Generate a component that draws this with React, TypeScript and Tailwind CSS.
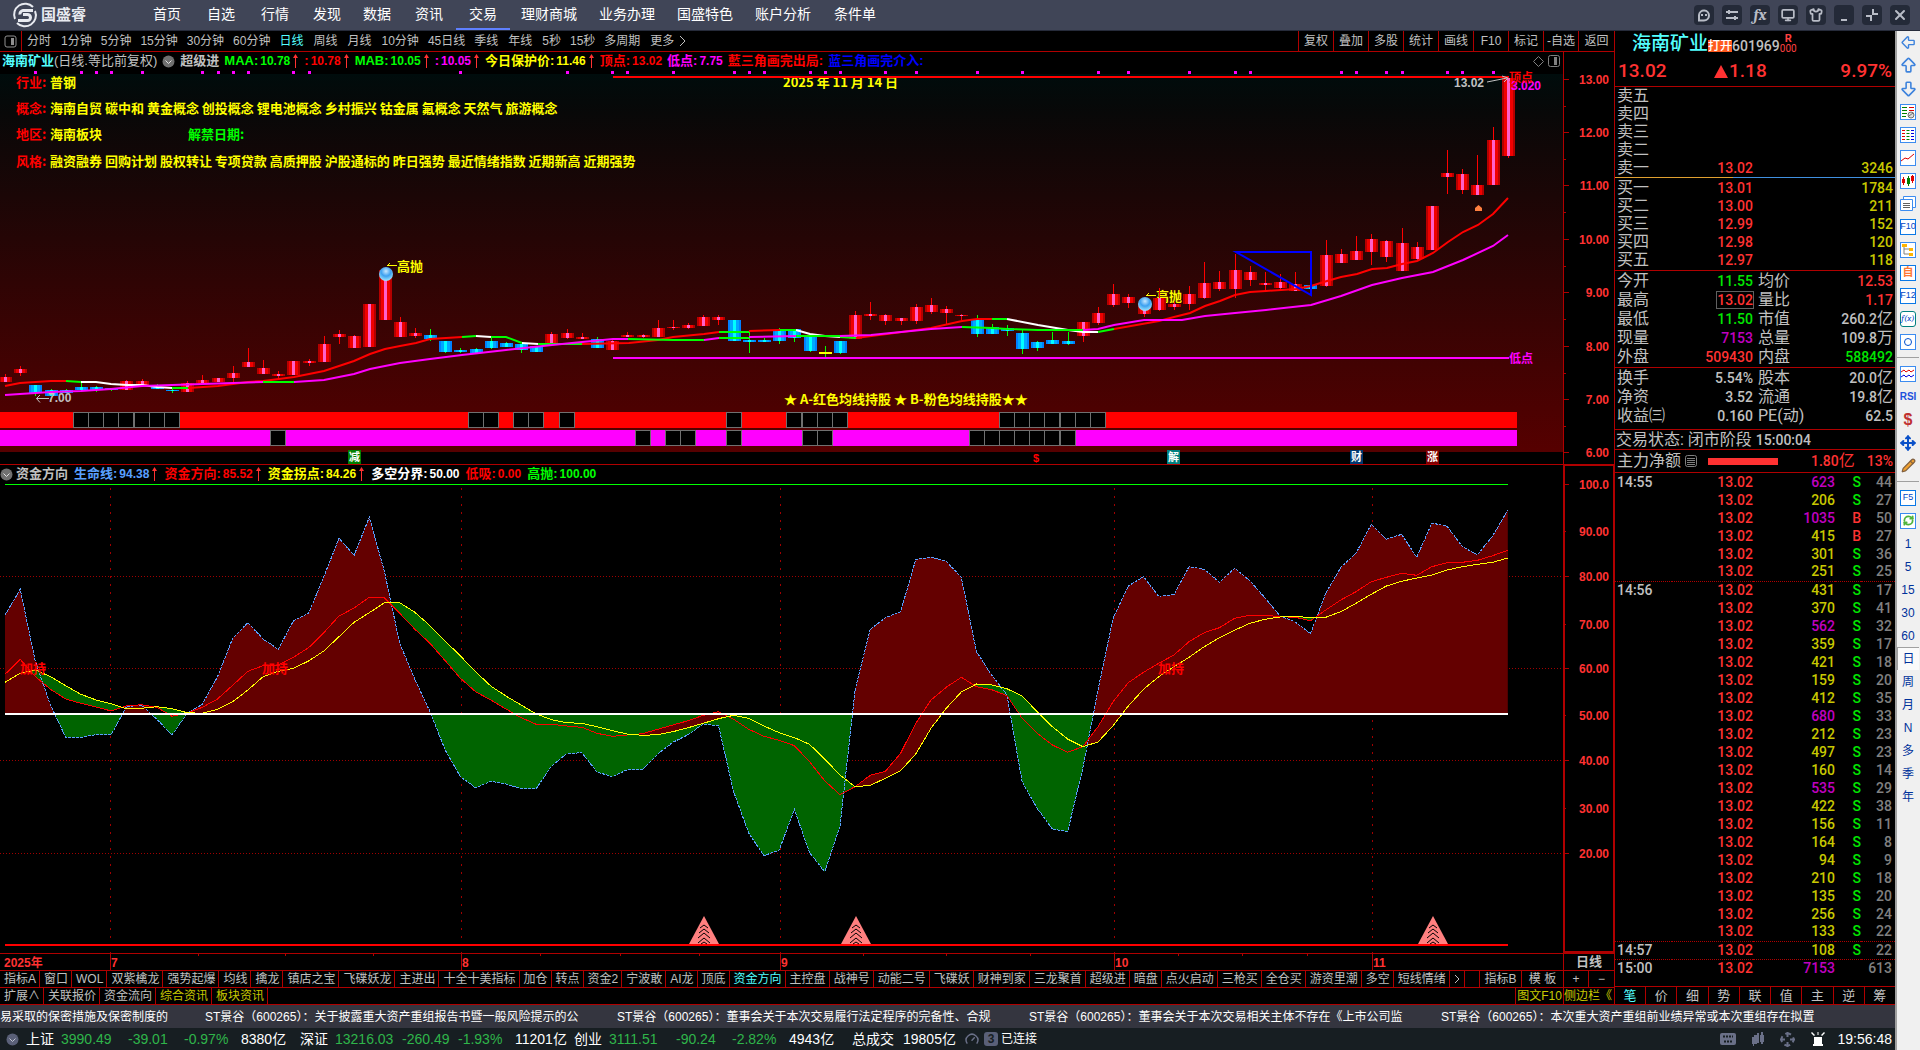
import React from 'react';
import {
  ArrowBigDown,
  ArrowBigLeft,
  ArrowBigUp,
  Gauge,
  Monitor,
  Move,
  Pencil,
  RefreshCw,
  Shirt,
  X,
} from 'lucide-react';

const CJK = 'font-["Liberation_Sans","Noto_Sans_CJK_SC",sans-serif]';
const DIGITS = 'font-["Roboto","Noto_Sans_CJK_SC",sans-serif] font-medium';

const NAV = [
  { label: '首页', w: 'w-[54px]' },
  { label: '自选', w: 'w-[54px]' },
  { label: '行情', w: 'w-[54px]' },
  { label: '发现', w: 'w-[50px]' },
  { label: '数据', w: 'w-[50px]' },
  { label: '资讯', w: 'w-[54px]' },
  { label: '交易', w: 'w-[54px]' },
  { label: '理财商城', w: 'w-[78px]' },
  { label: '业务办理', w: 'w-[78px]' },
  { label: '国盛特色', w: 'w-[78px]' },
  { label: '账户分析', w: 'w-[78px]' },
  { label: '条件单', w: 'w-[66px]' },
];

const PERIODS = ['分时', '1分钟', '5分钟', '15分钟', '30分钟', '60分钟', '日线', '周线', '月线', '10分钟', '45日线', '季线', '年线', '5秒', '15秒', '多周期', '更多'];
const TOOLS = ['复权', '叠加', '多股', '统计', '画线', 'F10', '标记', '-自选', '返回'];

const INDICATORS = [
  '指标A', '窗口', 'WOL', '双紫檎龙', '强势起爆', '均线', '擒龙', '镇店之宝', '飞碟妖龙', '主进出', '十全十美指标',
  '加仓', '转点', '资金2', '宁波敢', 'AI龙', '顶底', '资金方向', '主控盘', '战神号', '动能二号', '飞碟妖', '财神到家',
  '三龙聚首', '超级进', '暗盘', '点火启动', '三枪买', '全仓买', '游资里潮', '多空', '短线情绪',
];

type Candle = [number, number, number, number, string];

// high, body top, body bottom, low, colour
const CANDLES: Candle[] = [
  [374, 377, 382, 382, 'r'], [366, 369, 373, 376, 'r'], [385, 385, 393, 396, 'b'], [389, 390, 396, 396, 'b'],
  [389, 390, 393, 393, 'b'], [382, 387, 390, 390, 'b'], [386, 387, 390, 392, 'b'], [388, 388, 390, 391, 'b'],
  [380, 381, 390, 390, 'r'], [379, 381, 385, 385, 'r'], [384, 387, 389, 389, 'b'], [388, 390, 391, 393, 'b'],
  [381, 383, 392, 392, 'r'], [375, 380, 383, 383, 'r'], [378, 378, 382, 382, 'r'], [366, 373, 378, 382, 'r'],
  [348, 362, 367, 367, 'r'], [360, 368, 374, 374, 'r'], [371, 374, 376, 379, 'r'], [361, 361, 375, 375, 'r'],
  [359, 361, 363, 366, 'r'], [336, 344, 362, 362, 'r'], [330, 334, 337, 344, 'r'], [335, 336, 348, 348, 'r'],
  [304, 304, 347, 347, 'r'], [268, 270, 320, 320, 'r'], [317, 322, 337, 337, 'r'], [328, 333, 336, 338, 'r'],
  [329, 335, 339, 341, 'b'], [341, 341, 352, 353, 'b'], [348, 350, 352, 353, 'b'], [348, 349, 353, 353, 'b'],
  [338, 341, 348, 349, 'b'], [342, 343, 347, 347, 'b'], [344, 344, 350, 353, 'b'], [346, 346, 352, 352, 'b'],
  [332, 334, 345, 345, 'r'], [329, 333, 338, 339, 'r'], [333, 337, 339, 339, 'r'], [337, 339, 348, 348, 'b'],
  [340, 341, 350, 350, 'r'], [332, 335, 337, 337, 'r'], [334, 335, 337, 338, 'r'], [320, 328, 337, 337, 'r'],
  [320, 327, 328, 330, 'r'], [323, 325, 328, 329, 'r'], [315, 317, 326, 326, 'r'], [315, 317, 320, 325, 'r'],
  [320, 320, 341, 341, 'b'], [331, 340, 342, 353, 'b'], [338, 340, 342, 342, 'b'], [328, 331, 341, 344, 'b'],
  [329, 329, 338, 342, 'b'], [337, 337, 351, 352, 'b'], [346, 352, 354, 357, 'y'], [341, 341, 353, 354, 'b'],
  [311, 315, 339, 339, 'r'], [302, 314, 316, 320, 'r'], [314, 315, 321, 325, 'r'], [318, 318, 321, 325, 'r'],
  [304, 307, 321, 324, 'r'], [298, 305, 312, 314, 'r'], [306, 309, 313, 324, 'r'], [314, 315, 316, 320, 'r'],
  [315, 320, 334, 337, 'b'], [324, 327, 334, 334, 'b'], [325, 328, 331, 336, 'b'], [330, 333, 349, 354, 'b'],
  [341, 342, 348, 351, 'b'], [332, 340, 344, 344, 'b'], [332, 341, 344, 345, 'b'], [322, 322, 336, 342, 'r'],
  [307, 313, 323, 325, 'r'], [284, 294, 305, 307, 'r'], [294, 297, 303, 308, 'r'], [300, 303, 314, 317, 'r'],
  [288, 298, 310, 311, 'r'], [302, 304, 307, 310, 'r'], [286, 294, 304, 310, 'r'], [262, 283, 298, 299, 'r'],
  [271, 282, 289, 291, 'r'], [254, 270, 289, 298, 'r'], [266, 272, 280, 286, 'r'], [272, 283, 285, 291, 'r'],
  [274, 282, 288, 290, 'r'], [272, 284, 291, 291, 'r'], [284, 285, 289, 289, 'b'], [240, 255, 286, 287, 'r'],
  [249, 254, 263, 263, 'r'], [236, 251, 260, 260, 'r'], [234, 239, 252, 265, 'r'], [240, 241, 257, 262, 'r'],
  [228, 243, 271, 271, 'r'], [242, 247, 259, 261, 'r'], [206, 206, 250, 250, 'r'], [150, 173, 177, 194, 'r'],
  [169, 174, 190, 194, 'r'], [155, 185, 195, 195, 'r'], [127, 140, 185, 185, 'r'], [76, 78, 156, 158, 'r'],
];

const CANDLE_COLORS: Record<string, string[]> = {
  r: ['#b40000', '#f00000', '#ff60c8', '#ff0000'],
  b: ['#0080ff', '#00a8ff', '#00ffff', '#00ff00'],
  y: ['#ffff00', '#ffff00', '#ffff00', '#00ff00'],
};

const MA_RED = '#ff0000';
const MA_PINK = '#ff00ff';
const UP_GREEN = '#00ff00';

const MAA: [string, string][] = [
  [MA_RED, '5,386 20,383 51,381 66,381'],
  [UP_GREEN, '66,381 81,382'],
  ['#ffffff', '81,382 96,382 111,384 127,385 142,385 157,387 172,388'],
  [UP_GREEN, '172,388 188,388'],
  [MA_RED, '188,388 218,386 233,384 248,382 263,381 279,379 294,377 309,374 324,371 339,366 354,361 370,354 385,349 400,346 416,343 430,339 462,337'],
  [UP_GREEN, '462,337 476,336'],
  ['#ffffff', '476,336 491,337'],
  [UP_GREEN, '491,337 506,337 522,343'],
  ['#ffffff', '522,343 538,344'],
  [UP_GREEN, '538,344 552,344 582,344'],
  [MA_RED, '582,344 629,343 658,340 673,337 704,334 719,332'],
  [UP_GREEN, '719,332 749,332'],
  [MA_RED, '749,331 780,330'],
  [UP_GREEN, '780,330 796,330'],
  ['#ffffff', '796,330 810,334 825,336 840,337'],
  [UP_GREEN, '840,337 856,338'],
  [MA_RED, '856,338 887,334 931,328 962,321 977,319 992,319'],
  [UP_GREEN, '992,319 1007,319'],
  ['#ffffff', '1007,319 1038,325 1068,330 1083,332 1098,332'],
  [UP_GREEN, '1098,332 1114,329'],
  [MA_RED, '1114,329 1159,321 1174,317 1190,313 1205,306 1220,301 1235,295 1250,292 1266,291 1281,290 1296,289 1311,286 1327,281 1341,277 1357,274 1372,269 1387,268 1402,264 1417,261 1433,253 1448,242 1463,232 1478,225 1493,214 1508,198'],
];

const MAB: [string, string][] = [
  [MA_PINK, '5,395 20,394 51,392 81,391 111,389 142,386 172,385 203,384 233,383 263,382'],
  [UP_GREEN, '263,382 294,382'],
  [MA_PINK, '294,382 324,380 339,377 354,374 370,369 400,363 430,359 462,355 506,350 552,345 582,342 613,339 628,339'],
  [UP_GREEN, '628,339 673,340 704,340'],
  [MA_PINK, '704,340 719,338'],
  [UP_GREEN, '719,338 749,338'],
  [MA_PINK, '749,337 796,336'],
  [UP_GREEN, '796,336 840,336'],
  [MA_PINK, '840,336 871,335 901,332 931,329 962,327'],
  [UP_GREEN, '962,327 992,328 1007,329 1038,330 1083,330'],
  [MA_PINK, '1083,330 1098,329 1114,325 1144,320 1182,320 1205,316 1235,313 1266,310 1311,305 1341,296 1372,285 1402,278 1433,272 1463,260 1493,246 1508,235'],
];

const DOTS = [
  2, 5, 6, 7, 9, 13, 14, 15, 16, 19, 20, 30, 37, 40, 41, 44, 48, 49, 50, 53, 54, 55, 58, 60, 64, 67, 72, 74, 78, 81, 82,
  88, 89, 91, 92, 95, 96, 98,
];
const RED_GAPS = [5, 6, 7, 8, 9, 10, 11, 31, 32, 34, 35, 37, 48, 52, 53, 54, 55, 66, 67, 68, 69, 70, 71, 72];
const PINK_GAPS = [18, 42, 44, 45, 48, 53, 54, 64, 65, 66, 67, 68, 69, 70];

// Sub chart series, three steps to a pixel, measured down from the panel top
const LIFE = [
  465, 388, 605, 735, 832, 832, 824, 824, 740, 735, 778, 825, 760, 733, 650, 535, 488, 537, 568, 483, 460, 350, 235, 286, 172,
  335, 550, 658, 755, 870, 950, 983, 964, 972, 986, 986, 918, 881, 878, 936, 950, 929, 929, 882, 847, 824, 792, 797, 995, 1120,
  1187, 1170, 1048, 1178, 1235, 1100, 690, 508, 473, 455, 298, 292, 304, 352, 575, 645, 705, 965, 1045, 1107, 1115, 925, 690, 475, 378,
  350, 409, 404, 320, 328, 367, 325, 362, 413, 468, 486, 521, 400, 322, 280, 193, 238, 223, 292, 189, 199, 260, 284, 228, 150,
];
const FUND = [
  643, 598, 650, 688, 717, 730, 741, 753, 738, 734, 742, 769, 759, 742, 717, 676, 634, 617, 615, 592, 563, 518, 468, 444, 412,
  414, 460, 508, 550, 602, 655, 695, 720, 747, 773, 793, 793, 798, 802, 820, 829, 825, 821, 808, 795, 782, 766, 755, 778, 808,
  829, 841, 857, 905, 962, 1004, 980, 946, 934, 880, 790, 720, 682, 652, 680, 689, 707, 775, 820, 855, 877, 860, 800, 725, 668,
  637, 610, 585, 545, 518, 503, 475, 466, 466, 470, 472, 482, 450, 420, 395, 365, 352, 340, 346, 320, 308, 307, 301, 287, 271,
];
const TURN = [
  667, 640, 630, 650, 677, 703, 720, 731, 746, 745, 740, 746, 758, 760, 748, 725, 690, 650, 634, 625, 603, 573, 530, 487, 458,
  428, 428, 457, 497, 543, 588, 635, 678, 708, 735, 762, 779, 788, 790, 800, 812, 822, 826, 824, 815, 803, 790, 776, 766, 775,
  798, 818, 833, 853, 897, 945, 980, 976, 955, 932, 882, 805, 745, 696, 672, 675, 686, 708, 755, 800, 837, 860, 846, 797, 738,
  688, 650, 620, 592, 560, 533, 511, 490, 478, 471, 470, 472, 472, 455, 430, 403, 378, 364, 354, 345, 330, 320, 313, 307, 294,
];

const barX = (i: number) => 5 + i * 15.18;
const subY = (v: number) => 460 + v / 3;
const linePoints = (s: number[]) => s.map((v, i) => `${barX(i).toFixed(1)},${subY(v).toFixed(1)}`).join(' ');

// Splits the area between two series into the parts where a is above b and the rest
const bands = (a: number[], b: number[]) => {
  let above = '';
  let below = '';
  for (let i = 0; i < a.length - 1; i++) {
    const d0 = b[i] - a[i];
    const d1 = b[i + 1] - a[i + 1];
    const quad = (x0: number, a0: number, b0: number, x1: number, a1: number, b1: number) =>
      `M${x0.toFixed(1)} ${subY(a0).toFixed(1)}L${x1.toFixed(1)} ${subY(a1).toFixed(1)}L${x1.toFixed(1)} ${subY(b1).toFixed(1)}L${x0.toFixed(1)} ${subY(b0).toFixed(1)}Z`;
    if (d0 * d1 < 0) {
      const t = d0 / (d0 - d1);
      const xm = barX(i + t);
      const ym = a[i] + (a[i + 1] - a[i]) * t;
      const first = quad(barX(i), a[i], b[i], xm, ym, ym);
      const second = quad(xm, ym, ym, barX(i + 1), a[i + 1], b[i + 1]);
      if (d0 > 0) {
        above += first;
        below += second;
      } else {
        below += first;
        above += second;
      }
    } else if (d0 + d1 > 0) {
      above += quad(barX(i), a[i], b[i], barX(i + 1), a[i + 1], b[i + 1]);
    } else {
      below += quad(barX(i), a[i], b[i], barX(i + 1), a[i + 1], b[i + 1]);
    }
  }
  return { above, below };
};

const MIDDLE = LIFE.map(() => 762);
const lifeBands = bands(LIFE, MIDDLE);
const fundBands = bands(FUND, TURN);

const MONTHS = [
  { x: 110, label: '7' },
  { x: 461, label: '8' },
  { x: 780, label: '9' },
  { x: 1114, label: '10' },
  { x: 1372, label: '11' },
];
const WEEK_TICKS = [198, 285, 373, 540, 620, 699, 863, 946, 1030, 1178, 1242, 1307];

const WindowIcon = ({ d }: { d: string }) => (
  <svg className="size-[14px]" viewBox="0 0 14 14" fill="none" stroke="#b8bcc6" strokeWidth="2">
    <path d={d} />
  </svg>
);

const TopBar = () => (
  <header className="flex h-[31px] shrink-0 items-center border-b border-[#262b3a] bg-[#404557] text-sm text-white">
    <div className="flex w-[140px] items-center gap-[3px] pl-3">
      <svg className="size-[26px]" viewBox="0 0 26 26" fill="none" stroke="#e8eaf0">
        <path d="M21 5A11 11 0 0 0 3 17M5 21A11 11 0 0 0 23 9" strokeWidth="2" />
        <path d="M21 8.500H11a3.500 3.500 0 0 0-3 4" strokeWidth="3" />
        <path d="M11 12.500h4.500a3 3 0 0 1 0 6H6" strokeWidth="3" />
      </svg>
      <span className="text-[15px] font-bold text-[#e8eaf0]">国盛睿</span>
    </div>
    <nav className="flex h-full">
      {NAV.map((n) => (
        <button
          key={n.label}
          className={`${n.w} h-full border-b-2 whitespace-nowrap pb-[3px] pt-[2px] leading-5 ${n.label === '交易' ? 'border-[#5f80ff]' : 'border-transparent'}`}
        >
          {n.label}
        </button>
      ))}
    </nav>
    <div className="ml-auto flex gap-2 pr-[10px] text-[#b8bcc6]">
      {[
        { name: '消息', icon: <WindowIcon d="M2 12.500V7a5 5 0 1 1 5 5.500zM5 6v2M9 6v2" /> },
        { name: '设置', icon: <WindowIcon d="M1 4h12M1 10h12M4 2v4M10 8v4" /> },
        { name: '公式', icon: <span className="font-serif text-base font-bold italic leading-4">fx</span> },
        { name: '屏幕', icon: <Monitor size={14} strokeWidth={3} /> },
        { name: '皮肤', icon: <Shirt size={14} strokeWidth={3} /> },
        { name: '最小化', icon: <WindowIcon d="M4 12h6" /> },
        { name: '还原', icon: <WindowIcon d="M8 1v5h5M6 13V8H1" /> },
        { name: '关闭', icon: <X size={16} strokeWidth={3} /> },
      ].map((b) => (
        <button key={b.name} aria-label={b.name} className="flex size-5 items-center justify-center rounded-[4px] bg-[#242a38]">
          {b.icon}
        </button>
      ))}
    </div>
  </header>
);

const PeriodBar = () => (
  <div className="flex h-[21px] shrink-0 border-b border-[#b00000] text-xs text-[#c0c0c0]">
    <div className="flex w-[22px] items-center justify-center border-r border-[#b00000]">
      <svg className="size-[13px]" viewBox="0 0 13 13">
        <rect x="1" y="1" width="11" height="11" rx="2" fill="none" stroke="#909090" />
        <rect x="7" y="3" width="3" height="7" fill="#909090" />
      </svg>
    </div>
    {PERIODS.map((p) => (
      <button
        key={p}
        className={`pl-[5px] leading-5 whitespace-nowrap ${/\d/.test(p) ? 'pr-1' : 'pr-[5px]'} ${p === '日线' ? 'text-[#54ffff]' : ''}`}
      >
        {p}
      </button>
    ))}
    <button aria-label="更多周期">
      <svg className="h-3 w-2" viewBox="0 0 8 12" fill="none" stroke="#c0c0c0">
        <path d="M1 1l5 5-5 5" />
      </svg>
    </button>
    <div className="ml-auto flex">
      {TOOLS.map((t) => (
        <button key={t} className="w-[35px] border-l border-[#b00000] leading-5 whitespace-nowrap last:w-[36px]">
          {t}
        </button>
      ))}
    </div>
  </div>
);

interface InfoItemProps {
  label: string;
  value?: string;
  color: string;
  up?: boolean;
}

const InfoItem: React.FC<InfoItemProps> = ({ label, value, color, up }) => (
  <span className={`flex items-center whitespace-nowrap font-bold ${color}`}>
    <span className="text-[13px]">{label}</span>
    {value && <span className="ml-[2px] text-xs">{value}</span>}
    {up && (
      <svg className="ml-px h-[14px] w-[8px]" viewBox="0 0 8 14">
        <path d="M4.500 0L7 4H2z" fill="#ff3232" />
        <path d="M4.500 3v11" stroke="#ff3232" />
      </svg>
    )}
  </span>
);

const Chevron = () => (
  <svg className="size-[13px] shrink-0" viewBox="0 0 13 13">
    <circle cx="6.500" cy="6.500" r="6" fill="#707070" />
    <path d="M3.500 5.500l3 3 3-3" fill="none" stroke="#e0e0e0" />
  </svg>
);

const GapBoxes = ({ gaps, y }: { gaps: number[]; y: number }) => (
  <>
    {gaps.map((k) => (
      <rect key={k} x={Math.round(barX(k)) - 7.5} y={y} width="15" height="15" fill="#000" stroke="#707070" />
    ))}
  </>
);

const Ball = ({ x, y }: { x: number; y: number }) => (
  <g>
    <circle cx={x} cy={y} r="7" fill="url(#ball)" />
    <path d={`M${x + 1} ${y - 8}l3-3M${x + 1} ${y - 8.5}h10`} stroke="#ffff00" fill="none" />
  </g>
);

const Marker = ({ x, label, fill }: { x: number; label: string; fill: string }) => (
  <g>
    <rect x={x} y="450" width="13" height="14" fill={fill} />
    <text x={x + 1} y="461" fill="#fff" className="text-[11px] font-bold">{label}</text>
  </g>
);

const PriceChart = () => (
  <svg className="block min-h-0 w-full flex-1" viewBox="0 70 1563 394" preserveAspectRatio="xMinYMin meet">
    <defs>
      <linearGradient id="bg" x1="0" y1="0" x2="0" y2="1">
        <stop offset="0" stopColor="#000c0c" />
        <stop offset="0.1" stopColor="#080808" />
        <stop offset="1" stopColor="#560000" />
      </linearGradient>
      <radialGradient id="ball" cx="0.5" cy="0.3" r="0.7">
        <stop offset="0" stopColor="#c8e8ff" />
        <stop offset="0.5" stopColor="#3ca0f0" />
        <stop offset="1" stopColor="#a0e8ff" />
      </radialGradient>
    </defs>
    <rect x="0" y="74" width="1563" height="378" fill="url(#bg)" />
    {DOTS.map((k) => (
      <rect key={k} x={Math.round(barX(k)) - 1} y="71" width="3" height="3" fill="#ff00ff" />
    ))}

    <g className='font-["Noto_Sans_CJK_SC",sans-serif] text-[13px] font-bold' fill="#ffff00">
      <text x="16" y="87" fill="#ff0000">行业:</text>
      <text x="50" y="87">普钢</text>
      <text x="16" y="113" fill="#ff0000">概念:</text>
      <text x="50" y="113">海南自贸 碳中和 黄金概念 创投概念 锂电池概念 乡村振兴 钴金属 氟概念 天然气 旅游概念</text>
      <text x="16" y="139" fill="#ff0000">地区:</text>
      <text x="50" y="139">海南板块</text>
      <text x="188" y="139" fill="#00ff00">解禁日期:</text>
      <text x="16" y="166" fill="#ff0000">风格:</text>
      <text x="50" y="166">融资融券 回购计划 股权转让 专项贷款 高质押股 沪股通标的 昨日强势 最近情绪指数 近期新高 近期强势</text>
      <text x="783" y="87">2025 年 11 月 14 日</text>
      <text x="784" y="404">★ A-红色均线持股 ★ B-粉色均线持股★★</text>
      <text x="397" y="271">高抛</text>
      <text x="1156" y="301">高抛</text>
    </g>

    <g shapeRendering="crispEdges">
      {CANDLES.map(([high, top, bottom, low, kind], i) => {
        const x = Math.round(barX(i));
        const c = CANDLE_COLORS[kind];
        const h = Math.max(bottom - top, 1);
        return (
          <g key={i}>
            <rect x={x} y={high} width="1" height={Math.max(low - high, 1)} fill={c[3]} />
            <rect x={x - 6} y={top} width="13" height={h} fill={c[0]} />
            <rect x={x - 4} y={top} width="9" height={h} fill={c[1]} />
            <rect x={x - 1} y={top} width="3" height={h} fill={c[2]} />
          </g>
        );
      })}
      <rect x="613" y="76" width="896" height="2" fill="#ff0000" />
      <rect x="613" y="357" width="896" height="2" fill="#ff00ff" />
      <rect x="0" y="412" width="1517" height="16" fill="#ff0000" />
      <rect x="0" y="430" width="1517" height="16" fill="#ff00ff" />
    </g>
    <GapBoxes gaps={RED_GAPS} y={412.5} />
    <GapBoxes gaps={PINK_GAPS} y={430.5} />

    <g fill="none" strokeWidth="2">
      {MAA.map(([color, points]) => (
        <polyline key={points} points={points} stroke={color} />
      ))}
      {MAB.map(([color, points]) => (
        <polyline key={points} points={points} stroke={color} />
      ))}
      <path d="M1236 252H1311V295Z" stroke="#0000ff" />
    </g>
    <Ball x={386} y={274} />
    <Ball x={1145} y={304} />
    <path d="M1475 211v-3l3.500-3 3.500 3v3z" fill="#ff8040" />

    <g fill="none" stroke="#c0c0c0">
      <path d="M49 398.500H36.500M40 395l-3.500 3.500 3.500 4" />
      <path d="M1487 82l20-4M1502 76l6 2-4 4" />
    </g>
    <g className="text-xs font-bold">
      <text x="48" y="402" fill="#c0c0c0">7.00</text>
      <text x="1454" y="87" fill="#c0c0c0">13.02</text>
      <text x="1511" y="90" fill="#ff00ff">3.020</text>
      <text x="1509" y="82" fill="#ff0000">顶点</text>
      <text x="1509" y="363" fill="#ff00ff">低点</text>
    </g>
    <Marker x={348} label="减" fill="#008000" />
    <Marker x={1167} label="解" fill="#008080" />
    <Marker x={1350} label="财" fill="#003870" />
    <Marker x={1426} label="涨" fill="#800000" />
    <text x="1033" y="462" fill="#ff0000" className="text-[11px] font-bold">$</text>
  </svg>
);

const Peak = ({ x }: { x: number }) => (
  <g>
    <path d={`M${x} 916l15 28h-30z`} fill="#ff8080" />
    <path
      d={`M${x - 4} 928l4-3 4 3M${x - 5} 933l5-4 5 4M${x - 6} 938l6-5 6 5M${x - 6} 943l6-5 6 5M${x - 3} 944l3-2 3 2`}
      fill="none"
      stroke="#000"
    />
  </g>
);

const FundChart = () => (
  <svg className="block min-h-0 w-full flex-1" viewBox="0 483 1563 470" preserveAspectRatio="xMinYMin meet">
    <g stroke="#a00000" strokeDasharray="1 2">
      {[576.5, 668.5, 760.5, 853.5].map((y) => (
        <path key={y} d={`M0 ${y}H1563`} />
      ))}
    </g>
    <g stroke="#a00000" strokeDasharray="2 6">
      {MONTHS.map((m) => (
        <path key={m.x} d={`M${m.x + 0.5} 488V953`} />
      ))}
    </g>
    <path d={lifeBands.above + fundBands.above} fill="#640000" />
    <path d={lifeBands.below} fill="#006400" />
    <path d={fundBands.below} fill="#006400" />
    <path d={fundBands.above} fill="#640000" />
    <g fill="none" shapeRendering="crispEdges">
      <polyline points={linePoints(LIFE)} stroke="#5aa0ff" strokeDasharray="3 1" />
      <polyline points={linePoints(FUND)} stroke="#ff0000" />
      <polyline points={linePoints(TURN)} stroke="#ffff00" />
    </g>
    <rect x="5" y="484" width="1503" height="1" fill="#00ff00" />
    <rect x="5" y="713" width="1503" height="2" fill="#ffffff" />
    <rect x="5" y="944" width="1503" height="2" fill="#ff0000" />
    <g className="text-[13px] font-bold" fill="#ff0000">
      <text x="20" y="673">加持</text>
      <text x="262" y="673">加持</text>
      <text x="1158" y="673">加持</text>
    </g>
    <Peak x={704} />
    <Peak x={856} />
    <Peak x={1433} />
  </svg>
);

const PriceAxis = () => (
  <svg className="block h-full w-full text-xs font-bold" viewBox="0 52 50 412" preserveAspectRatio="xMinYMin meet">
    {[13, 12, 11, 10, 9, 8, 7, 6].map((p, i) => {
      const y = Math.round(78.5 + i * 53.4);
      return (
        <g key={p}>
          <path d={`M0 ${y + 0.5}h5`} stroke="#b00000" />
          {p > 6 && <path d={`M0 ${y + 27.5}h2`} stroke="#b00000" />}
          <text x="45" y={y + 5} textAnchor="end" fill="#ff3232">{p.toFixed(2)}</text>
        </g>
      );
    })}
  </svg>
);

const FundAxis = () => (
  <svg className="block h-full w-full text-xs font-bold" viewBox="0 466 48 485" preserveAspectRatio="xMinYMin meet">
    {[484, 531, 576, 624, 668, 715, 760, 808, 853].map((y, i) => (
      <g key={y}>
        <path d={`M0 ${y + 0.5}h${i % 2 ? 1 : 4}`} stroke="#b00000" />
        <text x="44" y={y + 5} textAnchor="end" fill="#ff3232">{i === 0 ? '100.0' : `${100 - i * 10}.00`}</text>
      </g>
    ))}
  </svg>
);

const Charts = () => (
  <>
    <section className="flex min-h-0 flex-[412] basis-0 border-b border-[#b00000]">
      <div className="flex min-w-0 flex-1 flex-col">
        <div className="flex h-[18px] shrink-0 items-center gap-[5px] pl-[2px] pr-[3px] text-[13px]">
          <span className="whitespace-nowrap font-bold text-[#c0c0c0]">
            <span className="text-[#54ffff]">海南矿业</span>
            <span className="font-normal">(日线.等比前复权)</span>
          </span>
          <Chevron />
          <InfoItem label="超级进" color="text-[#c0c0c0]" />
          <InfoItem label="MAA:" value="10.78" color="text-[#00ff00]" up />
          <InfoItem label=":" value="10.78" color="text-[#ff0000]" up />
          <InfoItem label="MAB:" value="10.05" color="text-[#00ff00]" up />
          <InfoItem label=":" value="10.05" color="text-[#ff00ff]" up />
          <InfoItem label="今日保护价:" value="11.46" color="text-[#ffff00]" up />
          <InfoItem label="顶点:" value="13.02" color="text-[#ff0000]" />
          <InfoItem label="低点:" value="7.75" color="text-[#ff00ff]" />
          <InfoItem label="藍三角画完出局:" color="text-[#ff0000]" />
          <InfoItem label="蓝三角画完介入:" color="text-[#0000ff]" />
          <svg className="ml-auto h-[13px] w-[27px]" viewBox="0 0 27 13" fill="none" stroke="#808080">
            <path d="M5.500 1.500l5 5-5 5-5-5z" />
            <rect x="15.500" y="0.500" width="11" height="11" rx="2" />
            <rect x="21" y="2" width="3" height="8" fill="#808080" stroke="none" />
          </svg>
        </div>
        <PriceChart />
      </div>
      <div className="w-[51px] border-l border-[#b00000]">
        <PriceAxis />
      </div>
    </section>

    <section className="flex min-h-0 flex-[488] basis-0">
      <div className="flex min-w-0 flex-1 flex-col">
        <div className="flex h-[18px] shrink-0 items-center gap-[6px]">
          <div className="flex items-center gap-[3px]">
            <Chevron />
            <InfoItem label="资金方向" color="text-[#c0c0c0]" />
          </div>
          <InfoItem label="生命线:" value="94.38" color="text-[#5aa0ff]" up />
          <InfoItem label="资金方向:" value="85.52" color="text-[#ff0000]" up />
          <InfoItem label="资金拐点:" value="84.26" color="text-[#ffff00]" up />
          <InfoItem label="多空分界:" value="50.00" color="text-white" />
          <InfoItem label="低吸:" value="0.00" color="text-[#ff0000]" />
          <InfoItem label="高抛:" value="100.00" color="text-[#00ff00]" />
        </div>
        <FundChart />
      </div>
      <div className="w-[51px] border-2 border-[#b00000] border-r-[1px] border-t-[1px]">
        <FundAxis />
      </div>
    </section>

    <div className="flex h-[17px] shrink-0 border-t border-[#b00000]">
      <svg className="min-w-0 flex-1 text-xs font-bold" viewBox="0 0 1563 16" preserveAspectRatio="xMinYMin meet">
        <text x="4" y="13" fill="#ff3232">2025年</text>
        {MONTHS.map((m) => (
          <g key={m.x}>
            <path d={`M${m.x + 0.5} 0v16`} stroke="#b00000" />
            <text x={m.x + 1} y="13" fill="#ff3232">{m.label}</text>
          </g>
        ))}
        {WEEK_TICKS.map((x) => (
          <path key={x} d={`M${x + 0.5} 0v2`} stroke="#b00000" />
        ))}
      </svg>
      <div className="w-[51px] border-l border-[#b00000] text-center text-[13px] font-bold leading-4 text-[#c0c0c0]">日线</div>
    </div>
  </>
);

const tabClass = 'border-r border-[#b00000] pl-1 pr-[3px] whitespace-nowrap leading-4';

const BottomTabs = () => (
  <>
    <div className="flex h-[17px] shrink-0 border-t border-[#b00000] text-xs text-[#c0c0c0]">
      {INDICATORS.map((t) => (
        <button key={t} className={`${tabClass} ${t === '资金方向' ? 'text-[#54ffff]' : ''}`}>
          {t}
        </button>
      ))}
      <button aria-label="下一页" className="flex w-[15px] items-center justify-center border-r border-[#b00000]">
        <svg className="h-[10px] w-[6px]" viewBox="0 0 6 10" fill="none" stroke="#c0c0c0">
          <path d="M1 1l4 4-4 4" />
        </svg>
      </button>
      <div className="ml-auto flex border-l border-[#b00000]">
        <button className="w-[42px] border-r border-[#b00000] leading-4">指标B</button>
        <button className="w-[42px] border-r border-[#b00000] leading-4">模 板</button>
        <button className="w-[25px] border-r border-[#b00000] leading-4">+</button>
        <button className="w-[25px] leading-4">−</button>
      </div>
    </div>
    <div className="flex h-[18px] shrink-0 border-y border-[#b00000] text-xs text-[#c0c0c0]">
      <button className={tabClass}>扩展∧</button>
      <button className={tabClass}>关联报价</button>
      <button className={tabClass}>资金流向</button>
      <button className={`${tabClass} text-[#c8c800]`}>综合资讯</button>
      <button className={`${tabClass} text-[#c8c800]`}>板块资讯</button>
      <div className="ml-auto flex text-[#c8c800]">
        <button className="w-[48px] border-l border-[#b00000] leading-4 whitespace-nowrap">图文F10</button>
        <button className="w-[51px] overflow-hidden border-l border-[#b00000] text-left leading-4 whitespace-nowrap">侧边栏《</button>
      </div>
    </div>
  </>
);

const ASKS = [
  ['卖五', '', ''],
  ['卖四', '', ''],
  ['卖三', '', ''],
  ['卖二', '', ''],
  ['卖一', '13.02', '3246'],
];
const BIDS = [
  ['买一', '13.01', '1784'],
  ['买二', '13.00', '211'],
  ['买三', '12.99', '152'],
  ['买四', '12.98', '120'],
  ['买五', '12.97', '118'],
];

const RED = 'text-[#ff3232]';
const GREEN = 'text-[#00e600]';
const GREY = 'text-[#c0c0c0]';
const PURPLE = 'text-[#c000c0]';

const QUOTES = [
  ['今开', '11.55', GREEN, '均价', '12.53', RED],
  ['最高', '13.02', `${RED} outline outline-[#606060]`, '量比', '1.17', RED],
  ['最低', '11.50', GREEN, '市值', '260.2亿', GREY],
  ['现量', '7153', PURPLE, '总量', '109.8万', GREY],
  ['外盘', '509430', RED, '内盘', '588492', GREEN],
];
const BASICS = [
  ['换手', '5.54%', GREY, '股本', '20.0亿', GREY],
  ['净资', '3.52', GREY, '流通', '19.8亿', GREY],
  ['收益㈢', '0.160', GREY, 'PE(动)', '62.5', GREY],
];

const TICKS: [string, number, string, number][] = [
  ['14:55', 623, 'S', 44], ['', 206, 'S', 27], ['', 1035, 'B', 50], ['', 415, 'B', 27], ['', 301, 'S', 36], ['', 251, 'S', 25],
  ['14:56', 431, 'S', 17], ['', 370, 'S', 41], ['', 562, 'S', 32], ['', 359, 'S', 17], ['', 421, 'S', 18], ['', 159, 'S', 20],
  ['', 412, 'S', 35], ['', 680, 'S', 33], ['', 212, 'S', 23], ['', 497, 'S', 23], ['', 160, 'S', 14], ['', 535, 'S', 29],
  ['', 422, 'S', 38], ['', 156, 'S', 11], ['', 164, 'S', 8], ['', 94, 'S', 9], ['', 210, 'S', 18], ['', 135, 'S', 20],
  ['', 256, 'S', 24], ['', 133, 'S', 22], ['14:57', 108, 'S', 22], ['15:00', 7153, '', 613],
];

const labelClass = `whitespace-nowrap text-base font-normal leading-[18px] ${GREY}`;

const BookRows = ({ rows }: { rows: string[][] }) => (
  <>
    {rows.map(([label, price, vol]) => (
      <div key={label} className="flex h-[18px] items-center">
        <span className={`w-[50px] ${labelClass}`}>{label}</span>
        <span className={`w-[86px] text-right ${RED}`}>{price}</span>
        <span className="flex-1 text-right text-[#c8c800]">{vol}</span>
      </div>
    ))}
  </>
);

const Value = ({ text }: { text: string }) => {
  const unit = text.match(/[亿万]$/);
  return unit ? (
    <>
      {text.slice(0, -1)}
      <span className="text-base font-normal leading-[18px]">{unit[0]}</span>
    </>
  ) : (
    <>{text}</>
  );
};

const QuoteRows = ({ rows }: { rows: string[][] }) => (
  <>
    {rows.map(([l1, v1, c1, l2, v2, c2]) => (
      <div key={l1} className="flex h-[19px] items-center">
        <span className={`w-[50px] ${labelClass}`}>{l1}</span>
        <span className="flex w-[86px] justify-end">
          <span className={`leading-4 ${c1}`}>{v1}</span>
        </span>
        <span className={`ml-[5px] ${labelClass}`}>{l2}</span>
        <span className={`flex flex-1 items-center justify-end ${c2}`}>
          <Value text={v2} />
        </span>
      </div>
    ))}
  </>
);

const QuotePanel = () => (
  <aside className={`flex w-[281px] shrink-0 flex-col overflow-hidden border-l border-[#b00000] text-sm ${DIGITS}`}>
    <div className="h-[56px] border-b border-[#b00000] px-[3px]">
      <div className="flex h-[26px] items-center pl-[14px]">
        <h1 className="text-[19px] font-medium leading-6 text-[#54ffff]">海南矿业</h1>
        <button className="mt-1 bg-[#ff5a1e] text-xs leading-3 text-white">打开</button>
        <span className={`mt-1 ${GREY}`}>601969</span>
        <span className="flex flex-col items-center text-[#ff4040]">
          <b className="text-[11px] leading-[10px]">R</b>
          <span className="text-[10px] font-normal leading-[10px]">000</span>
        </span>
      </div>
      <div className={`flex h-[28px] items-center text-[19px] ${RED}`}>
        <span className="w-[96px]">13.02</span>
        <svg className="mr-px h-[13px] w-[14px]" viewBox="0 0 14 13">
          <path d="M7 0l7 13H0z" fill="#ff3232" />
        </svg>
        <span>1.18</span>
        <span className="ml-auto">9.97%</span>
      </div>
    </div>

    <div className="h-[90px] px-[2px]">
      <BookRows rows={ASKS} />
    </div>
    <div className="flex h-[2px]">
      <div className="h-px w-[118px] bg-[#e0a030]" />
      <div className="h-px flex-1 bg-[#4090e0]" />
    </div>
    <div className="h-[92px] border-b border-[#b00000] px-[2px]">
      <BookRows rows={BIDS} />
    </div>
    <div className="h-[97px] border-b border-[#b00000] px-[2px]">
      <QuoteRows rows={QUOTES} />
    </div>
    <div className="h-[62px] border-b border-[#b00000] px-[2px]">
      <QuoteRows rows={BASICS} />
    </div>
    <div className={`h-[20px] border-b border-[#b00000] px-px ${labelClass}`}>
      交易状态: 闭市阶段 <span className="text-sm font-medium">15:00:04</span>
    </div>
    <div className="flex h-[23px] items-center border-b border-[#b00000] px-[2px]">
      <span className={labelClass}>主力净额</span>
      <svg className="ml-1 size-[13px]" viewBox="0 0 13 13" fill="none" stroke="#808080">
        <rect x="0.500" y="0.500" width="11" height="11" rx="2" />
        <path d="M2 3.500h8M2 5.500h8M2 7.500h8M2 9.500h8" />
      </svg>
      <div className="ml-[10px] h-[7px] w-[70px] bg-[#ff3232]" />
      <span className={`ml-auto flex items-center ${RED}`}>
        <Value text="1.80亿" />
      </span>
      <span className={`ml-3 ${RED}`}>13%</span>
    </div>

    <table className="w-full table-fixed border-collapse">
      <tbody>
        {TICKS.map(([time, vol, side, n], i) => (
          <tr key={i} className={`h-[18px] leading-[17px] ${time && i > 0 ? 'border-t border-dotted border-[#b00000]' : ''}`}>
            <td className={`w-[57px] p-0 pl-[2px] ${GREY}`}>{time}</td>
            <td className={`w-[81px] p-0 text-right ${RED}`}>13.02</td>
            <td className={`w-[82px] p-0 text-right ${vol > 500 ? PURPLE : 'text-[#c8c800]'}`}>{vol}</td>
            <td className={`w-[26px] p-0 text-right ${side === 'B' ? RED : GREEN}`}>{side}</td>
            <td className="p-0 pr-[3px] text-right text-[#808080]">{n}</td>
          </tr>
        ))}
      </tbody>
    </table>

    <div className={`mt-auto flex h-[19px] border-y border-[#b00000] text-[13px] font-normal ${GREY}`}>
      {['笔', '价', '细', '势', '联', '值', '主', '逆', '筹'].map((t, i) => (
        <button key={t} className={`flex-1 leading-4 ${i === 0 ? 'text-[#54ffff]' : 'border-l border-[#b00000]'}`}>
          {t}
        </button>
      ))}
    </div>
  </aside>
);

const Ticker = () => (
  <div className="flex h-[23px] shrink-0 items-center overflow-hidden whitespace-nowrap bg-[#34353f] text-xs text-white">
    <span className="w-[205px] shrink-0">易采取的保密措施及保密制度的</span>
    <span className="w-[412px] shrink-0">ST景谷（600265）：关于披露重大资产重组报告书暨一般风险提示的公</span>
    <span className="w-[412px] shrink-0">ST景谷（600265）：董事会关于本次交易履行法定程序的完备性、合规</span>
    <span className="w-[412px] shrink-0">ST景谷（600265）：董事会关于本次交易相关主体不存在《上市公司监</span>
    <span className="shrink-0">ST景谷（600265）：本次重大资产重组前业绩异常或本次重组存在拟置</span>
  </div>
);

const INDEXES = [
  ['上证', '3990.49', '-39.01', '-0.97%', '8380亿'],
  ['深证', '13216.03', '-260.49', '-1.93%', '11201亿'],
  ['创业', '3111.51', '-90.24', '-2.82%', '4943亿'],
];

const StatusBar = () => (
  <footer className="flex h-[22px] shrink-0 items-center whitespace-nowrap bg-[#171e22] pl-[6px] pr-[3px] text-sm text-white">
    <svg className="mr-[7px] size-[13px]" viewBox="0 0 13 13">
      <circle cx="6.500" cy="6.500" r="6" fill="#5a6078" />
      <path d="M3.500 5.500l3 3 3-3" fill="none" stroke="#c0c4d0" />
    </svg>
    {INDEXES.map(([name, price, chg, pct, amount]) => (
      <div key={name} className="flex w-[274px]">
        <span className="w-[35px]">{name}</span>
        <span className="w-[67px] text-[#2fb54a]">{price}</span>
        <span className="w-[56px] text-[#2fb54a]">{chg}</span>
        <span className="w-[57px] text-[#2fb54a]">{pct}</span>
        <span>{amount}</span>
      </div>
    ))}
    <span className="ml-1 w-[51px]">总成交</span>
    <span className="w-[62px]">19805亿</span>
    <Gauge size={14} strokeWidth={2.500} className="text-[#6a7088]" />
    <span className="ml-[5px] mr-[3px] size-[14px] rounded-[3px] bg-[#5a6078] text-center text-xs font-bold leading-[14px] text-[#171e22]">3</span>
    <span className="text-xs">已连接</span>
    <div className="ml-auto flex items-center text-[#6a7088]">
      <svg className="mr-4 h-3 w-4" viewBox="0 0 16 12">
        <rect width="16" height="12" rx="2" fill="#6a7088" />
        <path d="M3 3.500h10M4 8.500h8" stroke="#171e22" strokeWidth="2" strokeDasharray="2 1" />
      </svg>
      <svg className="mr-4 h-[14px] w-3" viewBox="0 0 12 14" fill="#6a7088">
        <path d="M0 5h2V3h2v9H2v2H1v-2H0zM4 3h1V1h2v10H5v1H4zM8 3h1V0h2v3h1v7h-1v2H9v-2H8z" />
      </svg>
      <svg className="mr-4 size-[15px]" viewBox="0 0 15 15" fill="none" stroke="#6a7088">
        <circle cx="7.500" cy="7.500" r="6" strokeWidth="2" strokeDasharray="6 3.400" strokeDashoffset="3" />
        <path d="M7.500 0v5M7.500 10v5M0 7.500h5M10 7.500h5" strokeWidth="2" />
      </svg>
      <svg className="mr-[13px] size-[14px]" viewBox="0 0 14 14" fill="#fff">
        <path d="M3 5h8v7h1v2H2v-2h1zM6.500 0h1v3h-1zM0 1l1-1 3 3-1 1zM14 1l-1-1-3 3 1 1z" />
      </svg>
      <time className="text-white">19:56:48</time>
    </div>
  </footer>
);

const Framed = ({ children }: { children: React.ReactNode }) => (
  <svg className="size-4" viewBox="0 0 16 16" fill="none">
    <rect x="0.500" y="0.500" width="15" height="15" fill="#fff" stroke="#3c8cf0" />
    {children}
  </svg>
);

const FramedText = ({ text }: { text: string }) => (
  <span className="flex size-4 items-center justify-center border border-[#0a78e6] bg-white text-[9px] leading-none text-[#0046c8]">{text}</span>
);

const SIDE_ICONS: [string, React.ReactNode][] = [
  ['后退', <ArrowBigLeft size={17} strokeWidth={2} className="text-[#3c82dc]" />],
  ['上翻', <ArrowBigUp size={19} strokeWidth={2} className="text-[#3c82dc]" />],
  ['下翻', <ArrowBigDown size={19} strokeWidth={2} className="text-[#3c82dc]" />],
  ['报价', <Framed><path d="M2 3.500h5M2 6.500h5M2 9.500h5M2 12.500h4" stroke="#008000" /><path d="M9 3.500h5M9 6.500h5" stroke="#e00000" /><circle cx="11" cy="11" r="3" fill="#ddd" stroke="#707070" /><path d="M9 12l4-3" stroke="#707070" /></Framed>],
  ['多列', <Framed><path d="M3.500 3v11" stroke="#e00000" strokeWidth="3" strokeDasharray="1 2" /><path d="M8 3v11" stroke="#008000" strokeWidth="3" strokeDasharray="1 2" /><path d="M12.500 3v11" stroke="#0000e0" strokeWidth="3" strokeDasharray="1 2" /></Framed>],
  ['分时图', <Framed><path d="M1 11l4-3 3 1 6-5" stroke="#e00000" /></Framed>],
  ['K线图', <Framed><path d="M3.500 4v8M12.500 2v8" stroke="#e00000" /><path d="M8.500 3v10" stroke="#008000" /><path d="M2 6h3v4H2zM11 3h3v5h-3z" fill="#e00000" /><path d="M7 5h3v6H7z" fill="#008000" /></Framed>],
  ['资料', <svg className="size-4" viewBox="0 0 16 16" fill="#fff" stroke="#3c8cf0"><path d="M3.500 0.500h12v11h-12z" /><path d="M0.500 3.500h12v11h-12z" /><path d="M3 7.500h7M3 9.500h7M3 11.500h7" stroke="#606060" /></svg>],
  ['F10', <FramedText text="F10" />],
  ['结构', <Framed><path d="M4 4v8h6M4 7h6" stroke="#808080" /><path d="M2 2h5v3H2zM9 6h4v3H9zM9 11h4v3H9z" fill="#ffb400" /></Framed>],
  ['自选', <span className="flex size-4 items-center justify-center border border-[#0a78e6] bg-white text-[11px] font-bold leading-none text-[#ff7832]">自</span>],
  ['F12', <FramedText text="F12" />],
  ['公式', <span className="flex size-4 items-center justify-center rounded-[3px] border border-[#008080] bg-white font-serif text-[9px] italic leading-none text-[#0046c8]">f(x)</span>],
  ['周期', <Framed><circle cx="8" cy="8" r="3.500" stroke="#0050d0" /></Framed>],
];

const SIDE_TOOLS: [string, React.ReactNode][] = [
  ['叠线', <Framed><path d="M1 6l3-2 2 2 3-2 2 2 3-2" stroke="#e00000" /><path d="M1 11l3-2 2 2 3-2 2 2 3-2" stroke="#0000e0" /></Framed>],
  ['RSI', <span className="text-[10px] font-bold text-[#1e50dc]">RSI</span>],
  ['资金', <span className="text-base font-bold leading-4 text-[#c03030]">$</span>],
  ['移动', <Move size={16} strokeWidth={3} className="text-[#0a50c8]" />],
  ['画线', <Pencil size={15} className="fill-[#f0a030] text-[#806040]" />],
];

const sideButton = 'flex h-[23px] shrink-0 items-center justify-center';

const SideBar = () => (
  <aside className="flex w-[25px] shrink-0 flex-col border-l-2 border-[#a0a0a0] bg-[#f0f0f0] pr-px text-xs text-[#00329b]">
    {SIDE_ICONS.map(([name, icon]) => (
      <button key={name} aria-label={name} className={sideButton}>{icon}</button>
    ))}
    <hr className="my-1 border-[#a0a0a0]" />
    {SIDE_TOOLS.map(([name, icon]) => (
      <button key={name} aria-label={name} className={sideButton}>{icon}</button>
    ))}
    <hr className="my-1 border-[#a0a0a0]" />
    <button aria-label="F5" className={sideButton}><FramedText text="F5" /></button>
    <button aria-label="刷新" className={sideButton}>
      <span className="flex size-4 items-center justify-center border border-[#3c8cf0] bg-white">
        <RefreshCw size={11} strokeWidth={4} className="text-[#50b43c]" />
      </span>
    </button>
    {['1', '5', '15', '30', '60', '日', '周', '月', 'N', '多', '季', '年'].map((t) => (
      <button key={t} className={`${sideButton} ${t === '日' ? 'border-l border-t border-[#a0a0a0] bg-[#fafafa]' : ''}`}>
        {t}
      </button>
    ))}
  </aside>
);

export default function App() {
  return (
    <div className={`flex h-screen flex-col overflow-hidden bg-black ${CJK}`}>
      <TopBar />
      <div className="flex min-h-0 flex-1">
        <div className="flex min-w-0 flex-1 flex-col">
          <div className="flex min-h-0 flex-1">
            <main className="flex min-w-0 flex-1 flex-col">
              <PeriodBar />
              <Charts />
              <BottomTabs />
            </main>
            <QuotePanel />
          </div>
          <Ticker />
          <StatusBar />
        </div>
        <SideBar />
      </div>
    </div>
  );
}
